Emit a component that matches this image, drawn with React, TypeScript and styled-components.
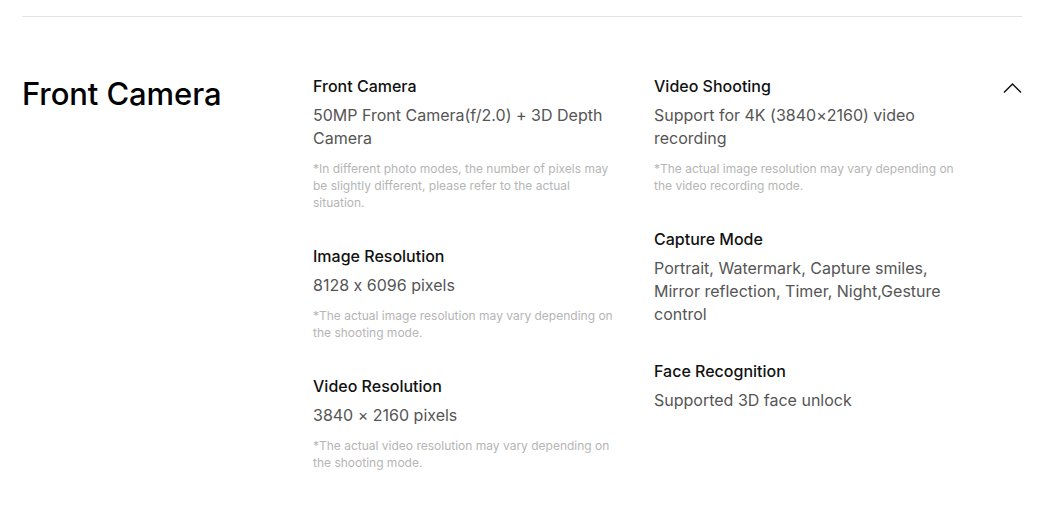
import styled, { createGlobalStyle } from "styled-components"

const GlobalStyle = createGlobalStyle`
    body {
        margin: 0;
        background: #fff;
        font-family: Inter, "Noto Sans", sans-serif;
        font-feature-settings: "calt" 0;
        color: #000;
    }
`

interface Spec {
    label: string,
    value: string,
    note?: string
}

const leftSpecs: Spec[] = [
    {
        label: "Front Camera",
        value: "50MP Front Camera(f/2.0) + 3D Depth Camera",
        note: "*In different photo modes, the number of pixels may be slightly different, please refer to the actual situation."
    },
    {
        label: "Image Resolution",
        value: "8128 x 6096 pixels",
        note: "*The actual image resolution may vary depending on the shooting mode."
    },
    {
        label: "Video Resolution",
        value: "3840 × 2160 pixels",
        note: "*The actual video resolution may vary depending on the shooting mode."
    }
]

const rightSpecs: Spec[] = [
    {
        label: "Video Shooting",
        value: "Support for 4K (3840×2160) video recording",
        note: "*The actual image resolution may vary depending on the video recording mode."
    },
    {
        label: "Capture Mode",
        value: "Portrait, Watermark, Capture smiles, Mirror reflection, Timer, Night,Gesture control"
    },
    {
        label: "Face Recognition",
        value: "Supported 3D face unlock"
    }
]

const Page = styled.div`
    width: 1000px;
    padding: 0 22px;
`

const Divider = styled.hr`
    margin: 16px 0 0;
    border: 0;
    border-top: 1px solid #e3e3e3;
`

const Section = styled.section`
    display: grid;
    grid-template-columns: 291px 341px 1fr auto;
    padding-top: 57px;
`

const SectionTitle = styled.h2`
    margin: 0;
    font-size: 31px;
    line-height: 40px;
    font-weight: 500;
    letter-spacing: -0.1px;
`

const Column = styled.div`
    display: flex;
    flex-direction: column;
    gap: 33px;
    width: 300px;
`

const Item = styled.div`
    display: flex;
    flex-direction: column;
`

const Label = styled.div`
    font-size: 16px;
    line-height: 24px;
    font-weight: 500;
    color: #111;
`

const Value = styled.div`
    margin-top: 6px;
    font-size: 16px;
    line-height: 23px;
    color: #555;
`

const Note = styled.div`
    margin-top: 10px;
    font-size: 12px;
    line-height: 17px;
    color: #b5b5b5;
`

const Toggle = styled.button`
    align-self: start;
    margin-top: 6px;
    padding: 0;
    border: 0;
    background: none;
    width: 19px;
    height: 14px;
    display: flex;
    cursor: pointer;
`

const SpecItem = ({ label, value, note }: Spec) => (
    <Item>
        <Label>{label}</Label>
        <Value>{value}</Value>
        {note && <Note>{note}</Note>}
    </Item>
)

const App = () => {
    return (
        <>
            <GlobalStyle />
            <Page>
                <Divider />
                <Section>
                    <SectionTitle>Front Camera</SectionTitle>
                    <Column>
                        {leftSpecs.map(s => <SpecItem key={s.label} {...s} />)}
                    </Column>
                    <Column>
                        {rightSpecs.map(s => <SpecItem key={s.label} {...s} />)}
                    </Column>
                    <Toggle aria-label="collapse">
                        <svg width="19" height="14" viewBox="0 0 19 14" fill="none">
                            <path d="M1 12.5L9.5 4L18 12.5" stroke="#111" strokeWidth="1.5" />
                        </svg>
                    </Toggle>
                </Section>
            </Page>
        </>
    )
}

export default App
